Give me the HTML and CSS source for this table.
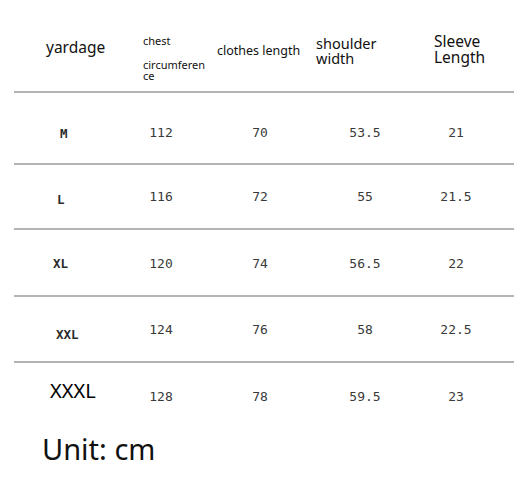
FILE: index.html
```html
<!DOCTYPE html>
<html>
<head>
<meta charset="utf-8">
<link rel="stylesheet" href="styles.css">
</head>
<body>
<div class="sheet">
  <div class="table">
    <div class="row head">
      <div class="cell h1"><span class="yard">yardage</span></div>
      <div class="cell h2">
        <div class="chest">chest</div>
        <div class="circ">circumferen<br>ce</div>
      </div>
      <div class="cell h3"><span class="clothes">clothes length</span></div>
      <div class="cell h4"><div class="shoulder">shoulder<br>width</div></div>
      <div class="cell h5"><div class="sleeve">Sleeve<br>Length</div></div>
    </div>
    <div class="row r1">
      <div class="cell size">M</div>
      <div class="cell num">112</div>
      <div class="cell num">70</div>
      <div class="cell num">53.5</div>
      <div class="cell num">21</div>
    </div>
    <div class="row r2">
      <div class="cell size">L</div>
      <div class="cell num">116</div>
      <div class="cell num">72</div>
      <div class="cell num">55</div>
      <div class="cell num">21.5</div>
    </div>
    <div class="row r3">
      <div class="cell size">XL</div>
      <div class="cell num">120</div>
      <div class="cell num">74</div>
      <div class="cell num">56.5</div>
      <div class="cell num">22</div>
    </div>
    <div class="row r4">
      <div class="cell size">XXL</div>
      <div class="cell num">124</div>
      <div class="cell num">76</div>
      <div class="cell num">58</div>
      <div class="cell num">22.5</div>
    </div>
    <div class="row r5">
      <div class="cell size big">XXXL</div>
      <div class="cell num">128</div>
      <div class="cell num">78</div>
      <div class="cell num">59.5</div>
      <div class="cell num">23</div>
    </div>
  </div>
  <div class="unit">Unit: cm</div>
</div>
</body>
</html>
```

FILE: styles.css
```css
html, body {
  margin: 0;
  padding: 0;
  background: #ffffff;
}
body {
  width: 528px;
  height: 496px;
  overflow: hidden;
  font-family: "Noto Sans", "Open Sans", sans-serif;
  color: #111;
}
.sheet {
  padding-left: 14px;
}
.table {
  width: 500px;
}
.row {
  display: grid;
  grid-template-columns: 100px 94px 104px 106px 76px 20px;
  border-bottom: 2px solid #b4b4b4;
}
.row.r5 { border-bottom: none; }
.head { height: 91px; }
.r1 { height: 70px; }
.r2 { height: 63px; }
.r3 { height: 65px; }
.r4 { height: 64px; }
.r5 { height: 62px; }

.head .cell { color: #111; }
.h1 { padding: 36px 0 0 32px; }
.yard { font-size: 15.5px; line-height: 20px; }
.h2 { padding: 34px 0 0 29px; }
.chest { font-size: 11px; line-height: 14px; }
.circ { font-size: 11px; line-height: 11px; margin-top: 11px; }
.h3 { padding: 38px 0 0 9px; }
.clothes { font-size: 12.5px; line-height: 16px; white-space: nowrap; }
.h4 { padding: 36px 0 0 4px; }
.shoulder { font-size: 14.5px; line-height: 15px; }
.h5 { padding: 33px 0 0 16px; }
.sleeve { font-size: 15.5px; line-height: 16px; }

.row:not(.head) .cell {
  display: flex;
  align-items: center;
  justify-content: center;
}
.r1 .cell { padding-top: 8px; }
.r3 .cell { padding-top: 1px; }
.r5 .num { padding-top: 4px; }
.num {
  font-family: "DejaVu Sans Mono", "Liberation Mono", monospace;
  font-size: 13px;
  color: #3a3a3a;
}
.row:not(.head) .size {
  font-family: "DejaVu Sans Mono", "Liberation Mono", monospace;
  font-size: 12.5px;
  font-weight: bold;
  color: #2a2a2a;
  justify-content: flex-start;
}
.r1 .size { padding-left: 46px; padding-top: 10px; }
.r2 .size { padding-left: 43px; padding-top: 6px; }
.r3 .size { padding-left: 39px; }
.r4 .size { padding-left: 42px; padding-top: 10px; }
.row.r5 .size.big {
  font-family: "Noto Sans", sans-serif;
  font-weight: normal;
  font-size: 20px;
  color: #000;
  padding-left: 36px;
  padding-bottom: 8px;
}
.unit {
  font-size: 29px;
  line-height: 40px;
  margin-top: 4px;
  padding-left: 28px;
  color: #111;
}
```
